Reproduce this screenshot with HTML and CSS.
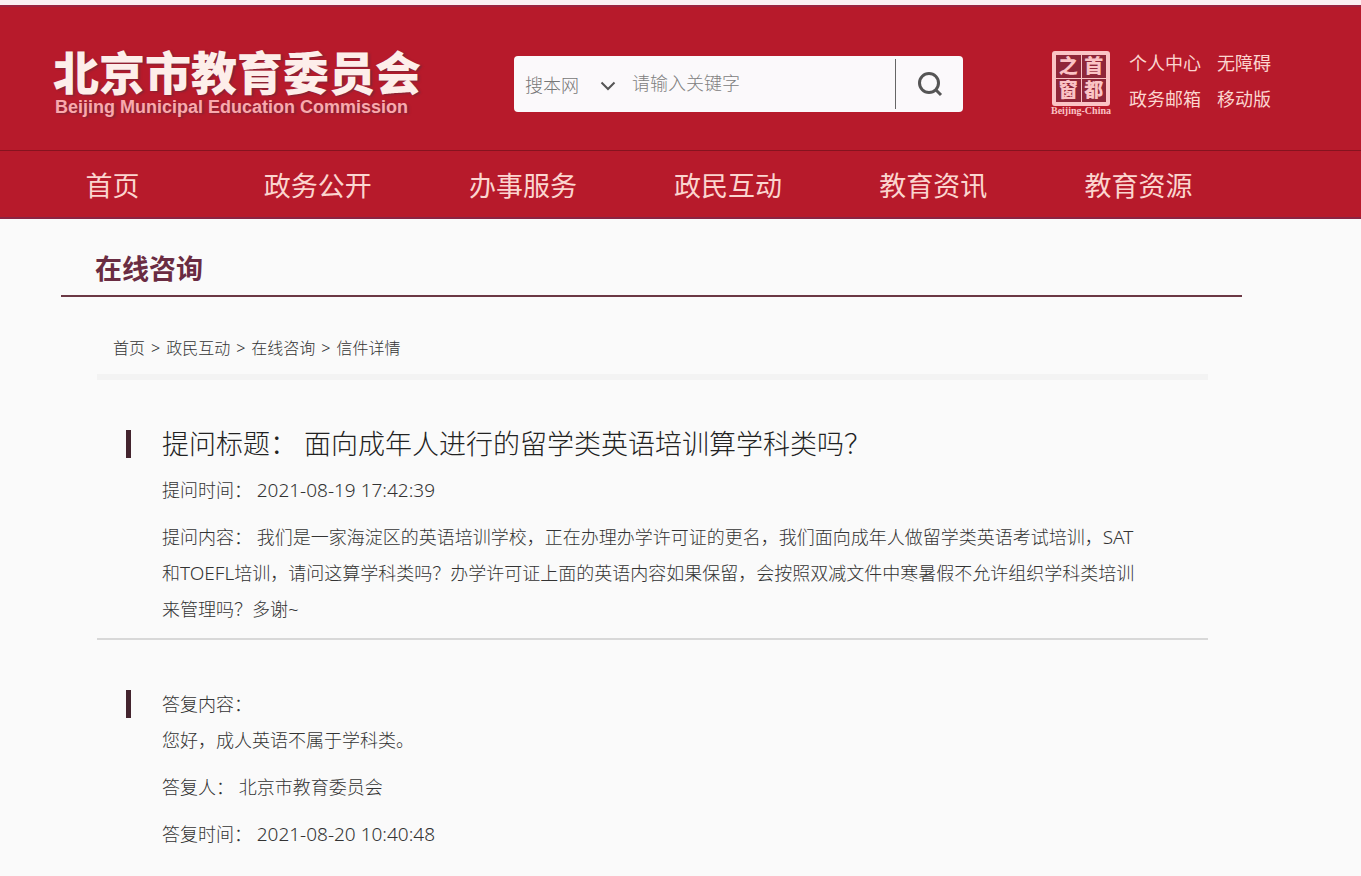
FILE: index.html
```
<!DOCTYPE html>
<html lang="zh-CN">
<head>
<meta charset="utf-8">
<meta name="viewport" content="width=device-width, initial-scale=1">
<title>北京市教育委员会 - 在线咨询</title>
<link rel="stylesheet" href="styles.css">
</head>
<body>
<header class="site-header">
  <div class="masthead">
    <a class="brand" href="#">
      <span class="brand-name">北京市教育委员会</span>
      <span class="brand-en" lang="en">Beijing Municipal Education Commission</span>
    </a>
    <form class="search" role="search">
      <div class="scope">
        <select class="scope-select" aria-label="搜索范围">
          <option>搜本网</option>
        </select>
        <svg class="scope-arrow" viewBox="0 0 16 10" aria-hidden="true"><path d="M1.500 1.500 8 8l6.500-6.500"/></svg>
      </div>
      <input class="search-input" type="text" placeholder="请输入关键字" aria-label="关键字">
      <button class="search-button" type="button" aria-label="搜索">
        <svg class="search-icon" viewBox="0 0 26 26" aria-hidden="true"><circle cx="12" cy="12" r="9.500"/><path d="M18.500 18.500 24 24"/></svg>
      </button>
    </form>
    <a class="capital" href="#">
      <span class="seal"><span>之</span><span>首</span><span>窗</span><span>都</span></span>
      <span class="capital-en" lang="en">Beijing-China</span>
    </a>
    <div class="quick-links">
      <a href="#">个人中心</a>
      <a href="#">无障碍</a>
      <a href="#">政务邮箱</a>
      <a href="#">移动版</a>
    </div>
  </div>
  <nav class="main-nav">
    <a href="#">首页</a>
    <a href="#">政务公开</a>
    <a href="#">办事服务</a>
    <a href="#">政民互动</a>
    <a href="#">教育资讯</a>
    <a href="#">教育资源</a>
  </nav>
</header>
<main class="page">
  <h1 class="section-title">在线咨询</h1>
  <div class="letter">
    <nav class="breadcrumb"><a href="#">首页</a><span>&gt;</span><a href="#">政民互动</a><span>&gt;</span><a href="#">在线咨询</a><span>&gt;</span><span>信件详情</span></nav>
    <section class="entry question">
      <h2 class="entry-title marked">提问标题： 面向成年人进行的留学类英语培训算学科类吗？</h2>
      <p>提问时间： <time class="latin">2021-08-19 17:42:39</time></p>
      <p>提问内容： 我们是一家海淀区的英语培训学校，正在办理办学许可证的更名，我们面向成年人做留学类英语考试培训，<span class="latin">SAT</span>和<span class="latin">TOEFL</span>培训，请问这算学科类吗？办学许可证上面的英语内容如果保留，会按照双减文件中寒暑假不允许组织学科类培训来管理吗？多谢<span class="latin">~</span></p>
    </section>
    <section class="entry answer">
      <p class="marked">答复内容：<br>您好，成人英语不属于学科类。</p>
      <p>答复人： 北京市教育委员会</p>
      <p>答复时间： <time class="latin">2021-08-20 10:40:48</time></p>
    </section>
  </div>
</main>
</body>
</html>
```
FILE: styles.css
```
* {
  box-sizing: border-box;
}

body {
  margin: 0;
  background: #fafafa;
  color: #333;
  font-family: "Noto Sans", "Noto Sans CJK SC", sans-serif;
  font-size: 18px;
  font-weight: 300;
  line-height: 36px;
}

a {
  color: inherit;
  text-decoration: none;
}

/* Header */
.site-header {
  border-top: 5px solid #fbeff2;
  border-bottom: 2px solid #8a2443;
  background: #b71a2b;
  color: #fbd5cf;
}

.masthead {
  display: flex;
  align-items: flex-start;
  height: 146px;
  padding: 40px 20px 0 53px;
  border-top: 2px solid #9c2440;
  border-bottom: 1px solid #86131f;
}

.brand {
  flex: 0 0 461px;
  display: flex;
  flex-direction: column;
  text-shadow: 2px 1px 2px #7d2637;
}

.brand-name {
  color: #fdeeea;
  font-size: 46px;
  font-weight: 900;
  line-height: 50px;
}

.brand-en {
  padding-left: 2px;
  color: #f9a9ad;
  font-family: "Liberation Sans", Arial, sans-serif;
  font-size: 18px;
  font-weight: 700;
  line-height: 20px;
}

.search {
  flex: 0 1 449px;
  min-width: 0;
  display: flex;
  align-items: center;
  height: 56px;
  margin-top: 9px;
  border-radius: 4px;
  background: #fbf9fb;
  color: #777;
}

.scope {
  position: relative;
  flex: 0 0 106px;
}

.scope-select,
.search-input {
  border: 0;
  background: transparent;
  color: #777;
  font: inherit;
  outline: 0;
}

.scope-select {
  appearance: none;
  width: 100%;
  padding: 2px 0 0 11px;
}

.scope-arrow {
  position: absolute;
  top: 16px;
  right: 4px;
  width: 16px;
  height: 10px;
  fill: none;
  stroke: #555;
  stroke-width: 2;
  pointer-events: none;
}

.search-input {
  flex: 1;
  min-width: 0;
  padding: 0 12px 2px;
}

.search-input::placeholder {
  color: #808080;
  opacity: 1;
}

.search-button {
  display: grid;
  place-items: center;
  flex: 0 0 68px;
  height: 50px;
  padding: 0;
  border: 0;
  border-left: 1px solid #666;
  background: transparent;
}

.search-icon {
  width: 26px;
  height: 26px;
  fill: none;
  stroke: #555;
  stroke-width: 3;
}

.capital {
  flex: none;
  display: flex;
  flex-direction: column;
  align-items: center;
  width: 62px;
  margin: 4px 17px 0 87px;
  color: #fbc3c5;
}

.seal {
  display: grid;
  grid-template-columns: 1fr 1fr;
  gap: 1px;
  width: 58px;
  border: 4px solid #fbc3c5;
  border-radius: 3px;
  background: #fbc3c5;
  font-size: 19px;
  font-weight: 900;
  line-height: 23px;
  text-align: center;
}

.seal span {
  background: #8f2639;
}

.capital-en {
  font-family: "Liberation Serif", "Times New Roman", serif;
  font-size: 10px;
  font-weight: 700;
  line-height: 10px;
}

.quick-links {
  display: grid;
  grid-template-columns: auto auto;
  column-gap: 16px;
  margin-top: -2px;
  font-weight: 400;
}

.main-nav {
  display: grid;
  grid-template-columns: repeat(6, 1fr);
  margin: 0 120px 0 10px;
  padding-top: 4px;
  font-size: 27px;
  font-weight: 400;
  line-height: 62px;
  text-align: center;
}

/* Content */
.page {
  margin: 0 119px 0 61px;
}

.section-title {
  margin: 0;
  padding: 29px 34px 6px;
  border-bottom: 2px solid #6b3844;
  color: #6a2c42;
  font-size: 27px;
  font-weight: 700;
  line-height: 41px;
}

.letter {
  margin: 0 34px 0 36px;
}

.breadcrumb {
  display: flex;
  gap: 6px;
  padding: 33px 16px 8px;
  border-bottom: 6px solid #f3f3f3;
  font-size: 16px;
}

.entry {
  padding: 0 62px 0 65px;
}

.entry p {
  margin: 0 0 11px;
}

.latin {
  font-size: 19px;
  line-height: 1;
}

.question {
  padding-top: 46px;
  border-bottom: 2px solid #d8d8d8;
}

.answer {
  padding-top: 46px;
}

.entry-title {
  margin: 0 0 10px;
  color: #222;
  font-size: 27px;
  font-weight: 300;
}

.marked {
  position: relative;
}

.marked::before {
  content: "";
  position: absolute;
  top: 4px;
  left: -36px;
  width: 5px;
  height: 28px;
  background: #43242e;
}
```
